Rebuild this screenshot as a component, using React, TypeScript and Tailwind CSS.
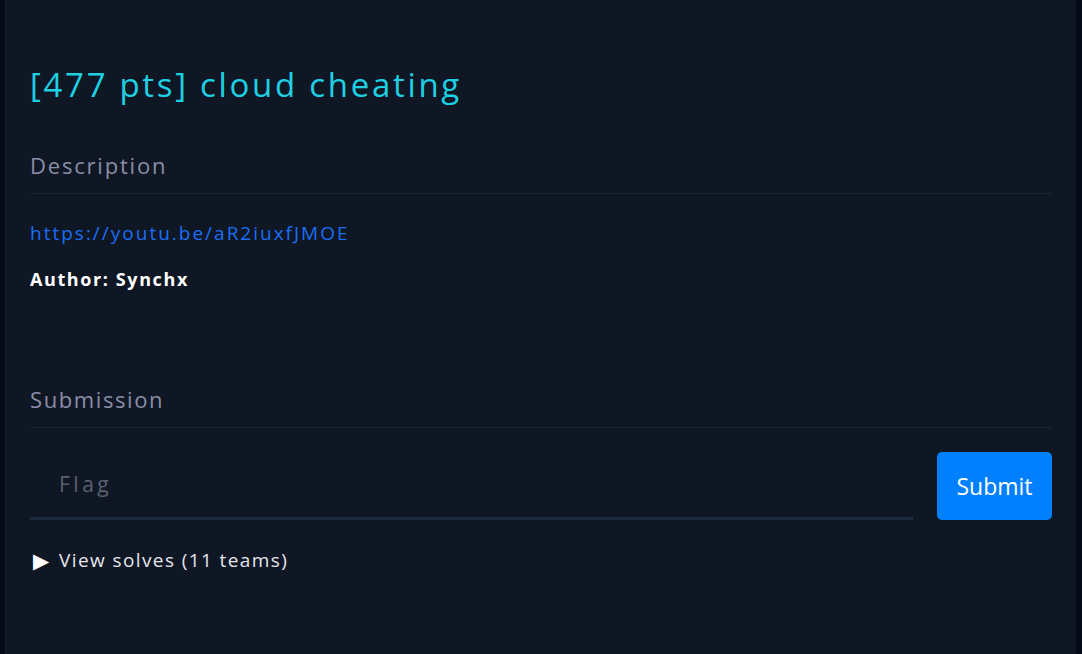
export default function App() {
  return (
    <div className="flex h-screen w-full bg-[#060a16]" style={{ fontFamily: "'Open Sans', sans-serif" }}>
      <div className="ml-[5px] w-[1071px] h-full bg-[#0f1725] border-l border-[#161e33] px-6 pt-[63px]">
        <h1 className="text-[33px] leading-[44px] tracking-[2.7px] text-[#1fd0e3] font-medium">[477 pts] cloud cheating</h1>

        <section className="mt-[42px]">
          <h2 className="text-[22px] leading-[32px] tracking-[1.8px] text-[#8a8ea6] font-medium pb-[12px] border-b border-[#1b2438]">Description</h2>
          <div className="pt-[26px]">
            <a href="#" className="block text-[19px] leading-[26px] tracking-[2px] text-[#1a6ef5]">https://youtu.be/aR2iuxfJMOE</a>
            <p className="mt-[21px] text-[18px] leading-[24px] tracking-[1.6px] text-white font-bold">Author: Synchx</p>
          </div>
        </section>

        <section className="mt-[92px]">
          <h2 className="text-[22px] leading-[32px] tracking-[1.6px] text-[#8a8ea6] font-medium pb-[12px] border-b border-[#1b2438]">Submission</h2>
          <div className="flex items-start gap-6 pt-[24px]">
            <div className="flex-1 h-[68px] flex items-center pl-[29px] border-b-[3px] border-[#1d2a42]">
              <span className="text-[21px] tracking-[3.5px] text-[#5c6170]">Flag</span>
            </div>
            <button className="w-[115px] h-[68px] rounded-[5px] bg-[#0080ff] text-white text-[23px]">Submit</button>
          </div>
          <div className="mt-[26px] flex items-center gap-[10px] text-[19px] tracking-[1.4px] text-[#e4e6ec] pl-[3px]">
            <span className="text-[21px] leading-none tracking-normal text-white">▶</span>
            <span>View solves (11 teams)</span>
          </div>
        </section>
      </div>
    </div>
  );
}
